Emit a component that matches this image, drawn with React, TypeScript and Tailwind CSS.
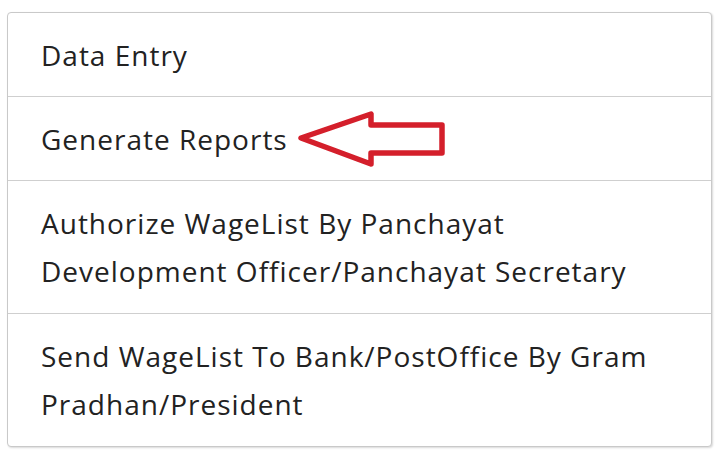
function Arrow() {
  return (
    <svg width="150" height="56" viewBox="0 0 150 56" className="ml-[9px] shrink-0">
      <path
        d="M4 27 L74 3 L74 14 L145 14 L145 42 L74 42 L74 53 Z"
        fill="#ffffff"
        stroke="#d41f2b"
        strokeWidth="5.5"
        strokeLinejoin="round"
      />
    </svg>
  );
}

export default function App() {
  return (
    <div className="min-h-screen w-full bg-white px-[7px] pt-[12px] font-['Open_Sans',sans-serif]">
      <ul className="w-[705px] overflow-hidden rounded-[4px] border border-[#c9c9c9] bg-white text-[28px] leading-[48px] tracking-[1px] text-[#222222] shadow-[1px_1px_2px_rgba(0,0,0,0.15)]">
        <li className="flex h-[84px] items-center border-b border-[#cfcfcf] pl-[33px]">Data Entry</li>
        <li className="flex h-[84px] items-center border-b border-[#cfcfcf] pl-[33px]">
          <span>Generate Reports</span>
          <Arrow />
        </li>
        <li className="border-b border-[#cfcfcf] py-[18px] pl-[33px]">
          Authorize WageList By Panchayat
          <br />
          Development Officer/Panchayat Secretary
        </li>
        <li className="py-[18px] pl-[33px]">
          Send WageList To Bank/PostOffice By Gram
          <br />
          Pradhan/President
        </li>
      </ul>
    </div>
  );
}
